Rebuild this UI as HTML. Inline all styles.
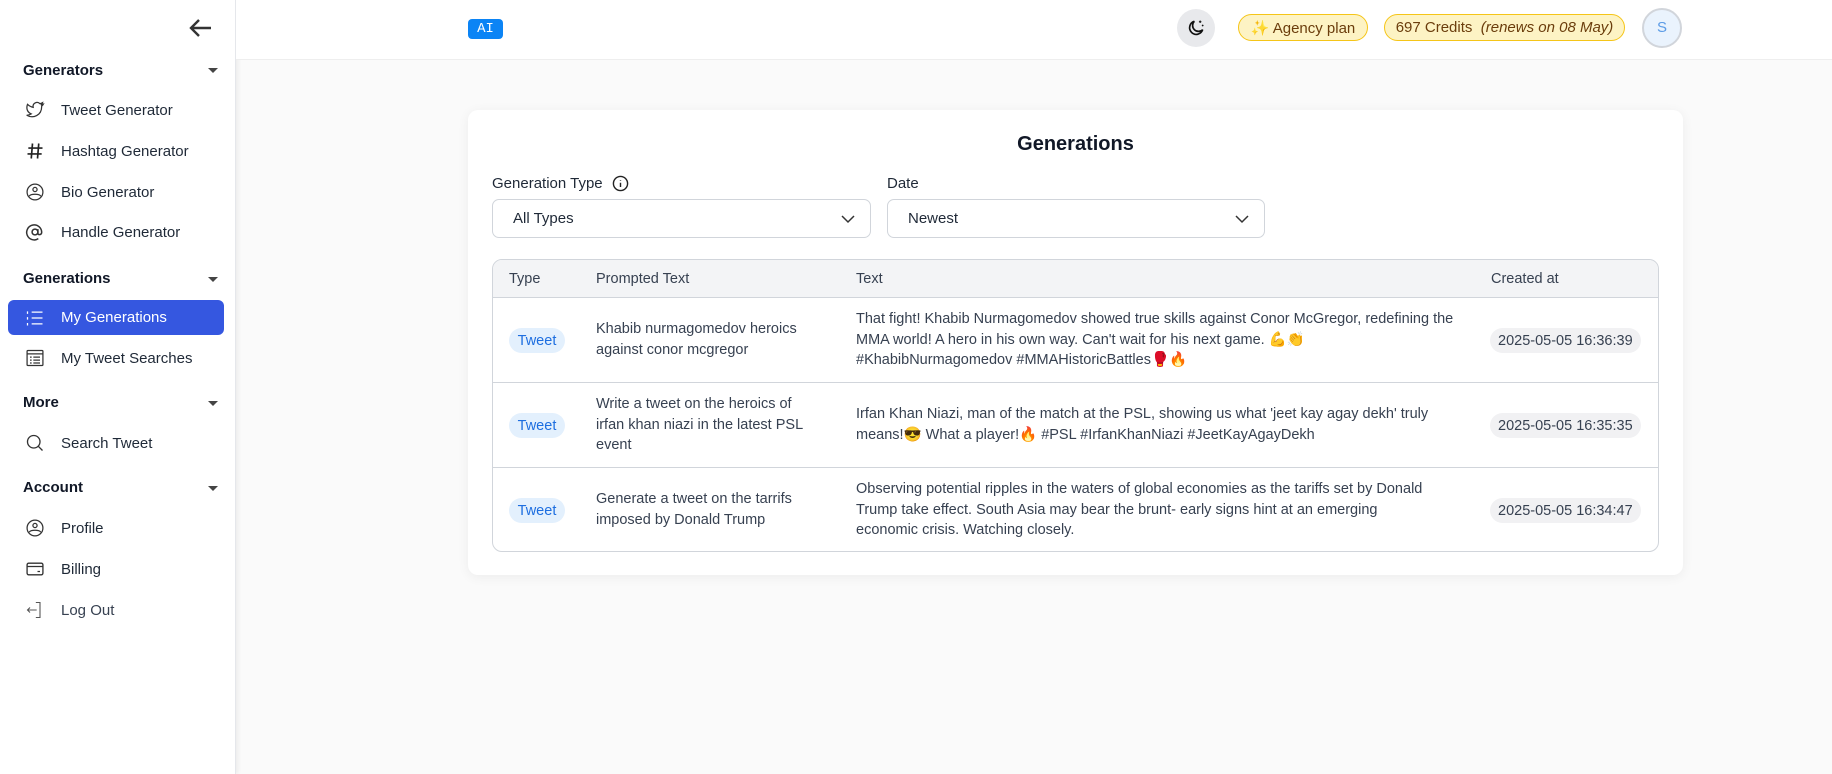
<!DOCTYPE html>
<html><head><meta charset="utf-8">
<style>
*{box-sizing:border-box;margin:0;padding:0}
body{width:1832px;height:774px;overflow:hidden;background:#fafafa;font-family:"Liberation Sans","Noto Sans CJK SC",sans-serif;color:#1f2937;position:relative}
.side{position:absolute;left:0;top:0;width:236px;height:774px;background:#fff;border-right:1px solid #e5e7eb;box-shadow:2px 0 4px rgba(0,0,0,.06)}
.hdr{position:absolute;left:236px;top:0;right:0;height:60px;background:#fff;border-bottom:1px solid #eeeeee}
.sec{position:absolute;left:23px;font-weight:bold;font-size:15px;color:#111827}
.caret{position:absolute;left:208px;width:0;height:0;border-left:5px solid transparent;border-right:5px solid transparent;border-top:5px solid #444}
.item{position:absolute;left:0;width:236px;height:36px;display:flex;align-items:center;font-size:15px;color:#1f2937}
.item svg{position:absolute;left:25px;width:20px;height:20px}
.item span{position:absolute;left:61px}
.active{left:8px;width:216px;background:#3557e0;border-radius:6px;color:#fff}
.active svg{left:17px}.active span{left:53px}
.pill{position:absolute;top:14px;height:27px;border:1px solid #f5c518;background:#fdf3c4;border-radius:14px;font-size:15px;color:#6b3d0c;display:flex;align-items:center;justify-content:center}
.card{position:absolute;left:468px;top:110px;width:1215px;height:465px;background:#fff;border-radius:10px;box-shadow:0 2px 12px rgba(0,0,0,.06)}
.lbl{position:absolute;top:175px;font-size:15px;color:#1f2937}
.sel{position:absolute;top:199px;height:39px;border:1px solid #d1d5db;border-radius:7px;background:#fff;font-size:15px;color:#1f2937;padding-left:20px;display:flex;align-items:center}
.sel svg{position:absolute;right:14px;top:13px}
.tbl{position:absolute;left:492px;top:259px;width:1167px;height:293px;border:1px solid #d1d5db;border-radius:10px;overflow:hidden}
.th{position:absolute;left:0;top:0;width:100%;height:38px;background:#f3f4f6;border-bottom:1px solid #d1d5db}
.c{position:absolute;font-size:14.5px;line-height:20.5px;color:#374151}
.row{position:absolute;left:0;width:100%;border-bottom:1px solid #d1d5db}
.tw{position:absolute;left:16px;width:56px;height:25px;border-radius:13px;background:#e3f0fd;color:#1d6ee0;font-size:14.5px;display:flex;align-items:center;justify-content:center}
.dt{position:absolute;left:997px;height:25px;padding:0 8px;border-radius:13px;background:#f1f1f3;color:#374151;font-size:14.5px;display:flex;align-items:center}
</style></head><body>
<div class="side">
  <svg style="position:absolute;left:189px;top:18px" width="24" height="20" viewBox="0 0 24 20"><path d="M22 10H3M10 2L2 10l8 8" fill="none" stroke="#333" stroke-width="2.4"/></svg>
  <div class="sec" style="top:62px">Generators</div><div class="caret" style="top:68px"></div>
  <div class="item" style="top:92px"><svg viewBox="0 0 24 24" fill="none" stroke="#333" stroke-width="1.5"><path d="M22 5c-1 .5-2 .7-3 .8 1-.6 1.7-1.5 2-2.6-1 .6-2 1-3.1 1.2A4.8 4.8 0 0 0 9.8 8.8 13.6 13.6 0 0 1 3 5.2s-3.5 8 4.5 11.5c-1.6 1.1-3.4 1.7-5.5 1.6 8 4.5 18 0 18-10.4v-.5C21 6.700 21.6 5.900 22 5z"/></svg><span>Tweet Generator</span></div>
  <div class="item" style="top:133px"><svg viewBox="0 0 24 24" fill="none" stroke="#222" stroke-width="2"><path d="M9 3L7.5 21M16.5 3L15 21M4 8.5h17M3 15.5h17"/></svg><span>Hashtag Generator</span></div>
  <div class="item" style="top:174px"><svg viewBox="0 0 24 24" fill="none" stroke="#333" stroke-width="1.5"><circle cx="12" cy="12" r="9.5"/><circle cx="12" cy="9" r="2.5"/><path d="M5 17c2-3 12-3 14 0"/></svg><span>Bio Generator</span></div>
  <div class="item" style="top:214px"><svg viewBox="0 0 24 24" fill="none" stroke="#333" stroke-width="1.8"><circle cx="12" cy="12" r="3.5"/><path d="M15.5 8.5v5c0 2 3.5 2.5 4.5-.5A9 9 0 1 0 16 20"/></svg><span>Handle Generator</span></div>
  <div class="sec" style="top:270px">Generations</div><div class="caret" style="top:277px"></div>
  <div class="item active" style="top:300px;height:35px"><svg viewBox="0 0 24 24" fill="none" stroke="#fff" stroke-width="1.5"><path d="M8 5h13M8 12h13M8 19h13M3 4v3M3 11v3M3 18v3"/></svg><span>My Generations</span></div>
  <div class="item" style="top:340px"><svg viewBox="0 0 24 24" fill="none" stroke="#333" stroke-width="1.5"><rect x="2.5" y="3" width="19" height="18" rx="1"/><path d="M2.5 7h19M6 11h2M10 11h8M6 14.5h2M10 14.5h8M6 18h2M10 18h8"/></svg><span>My Tweet Searches</span></div>
  <div class="sec" style="top:394px">More</div><div class="caret" style="top:401px"></div>
  <div class="item" style="top:425px"><svg viewBox="0 0 24 24" fill="none" stroke="#333" stroke-width="1.6"><circle cx="10.5" cy="10.5" r="7.5"/><path d="M16 16l5 5"/></svg><span>Search Tweet</span></div>
  <div class="sec" style="top:479px">Account</div><div class="caret" style="top:486px"></div>
  <div class="item" style="top:510px"><svg viewBox="0 0 24 24" fill="none" stroke="#333" stroke-width="1.5"><circle cx="12" cy="12" r="9.5"/><circle cx="12" cy="9" r="2.5"/><path d="M5 17c2-3 12-3 14 0"/></svg><span>Profile</span></div>
  <div class="item" style="top:551px"><svg viewBox="0 0 24 24" fill="none" stroke="#333" stroke-width="1.6"><rect x="2.5" y="5" width="19" height="14" rx="2"/><path d="M2.5 9h19M15 15h3"/></svg><span>Billing</span></div>
  <div class="item" style="top:592px;color:#374151"><svg viewBox="0 0 24 24" fill="none" stroke="#555" stroke-width="1.3"><path d="M13 3h5v18h-5M14 12H3M6 9l-3 3 3 3"/></svg><span>Log Out</span></div>
</div>
<div class="hdr">
  <div style="position:absolute;left:232px;top:19px;width:35px;height:20px;background:#0b84f5;border-radius:4px;color:#fff;font-family:'Liberation Mono',monospace;font-size:14px;text-align:center;line-height:20px">AI</div>
  <div style="position:absolute;left:941px;top:9px;width:38px;height:38px;border-radius:50%;background:#e8e9ec"><svg style="position:absolute;left:9px;top:9px" width="20" height="20" viewBox="0 0 24 24" fill="none" stroke="#111" stroke-width="2"><path d="M20 14A8 8 0 1 1 10 4a6.5 6.5 0 0 0 10 10z"/><path d="M17 3v3M15.5 4.5h3M20 8v2M19 9h2" stroke-width="1.2"/></svg></div>
  <div class="pill" style="left:1002px;width:130px">✨ Agency plan</div>
  <div class="pill" style="left:1148px;width:241px">697 Credits&nbsp;<i>&nbsp;(renews on 08 May)</i></div>
  <div style="position:absolute;left:1406px;top:8px;width:40px;height:40px;border-radius:50%;background:#eaf3fd;border:2px solid #d1d5db;color:#5b9be6;font-size:15px;text-align:center;line-height:36px">S</div>
</div>
<div class="card"></div>
<div style="position:absolute;left:468px;width:1215px;top:133px;text-align:center;font-weight:bold;font-size:20px;color:#111827">Generations</div>
<div class="lbl" style="left:492px">Generation Type</div>
<svg style="position:absolute;left:612px;top:175px" width="17" height="17" viewBox="0 0 24 24" fill="none" stroke="#222" stroke-width="2"><circle cx="12" cy="12" r="10"/><path d="M12 11v6M12 7v1"/></svg>
<div class="lbl" style="left:887px">Date</div>
<div class="sel" style="left:492px;width:379px">All Types<svg width="16" height="12" viewBox="0 0 16 12"><path d="M2 3l6 6 6-6" fill="none" stroke="#333" stroke-width="1.5"/></svg></div>
<div class="sel" style="left:887px;width:378px">Newest<svg width="16" height="12" viewBox="0 0 16 12"><path d="M2 3l6 6 6-6" fill="none" stroke="#333" stroke-width="1.5"/></svg></div>
<div class="tbl">
  <div class="th"></div>
  <div class="c" style="left:16px;top:9px">Type</div>
  <div class="c" style="left:103px;top:9px">Prompted Text</div>
  <div class="c" style="left:363px;top:9px">Text</div>
  <div class="c" style="left:998px;top:9px">Created at</div>
  <div class="row" style="top:38px;height:85px"></div>
  <div class="row" style="top:123px;height:85px"></div>
  <div class="tw" style="top:68px">Tweet</div>
  <div class="c" style="left:103px;top:59px;width:212px">Khabib nurmagomedov heroics against conor mcgregor</div>
  <div class="c" style="left:363px;top:49px;width:600px">That fight! Khabib Nurmagomedov showed true skills against Conor McGregor, redefining the MMA world! A hero in his own way. Can't wait for his next game. 💪👏 #KhabibNurmagomedov #MMAHistoricBattles🥊🔥</div>
  <div class="dt" style="top:68px">2025-05-05 16:36:39</div>
  <div class="tw" style="top:153px">Tweet</div>
  <div class="c" style="left:103px;top:134px;width:212px">Write a tweet on the heroics of irfan khan niazi in the latest PSL event</div>
  <div class="c" style="left:363px;top:144px;width:600px">Irfan Khan Niazi, man of the match at the PSL, showing us what 'jeet kay agay dekh' truly means!😎 What a player!🔥 #PSL #IrfanKhanNiazi #JeetKayAgayDekh</div>
  <div class="dt" style="top:153px">2025-05-05 16:35:35</div>
  <div class="tw" style="top:238px">Tweet</div>
  <div class="c" style="left:103px;top:229px;width:212px">Generate a tweet on the tarrifs imposed by Donald Trump</div>
  <div class="c" style="left:363px;top:219px;width:585px">Observing potential ripples in the waters of global economies as the tariffs set by Donald Trump take effect. South Asia may bear the brunt- early signs hint at an emerging economic crisis. Watching closely.</div>
  <div class="dt" style="top:238px">2025-05-05 16:34:47</div>
</div>
</body></html>
